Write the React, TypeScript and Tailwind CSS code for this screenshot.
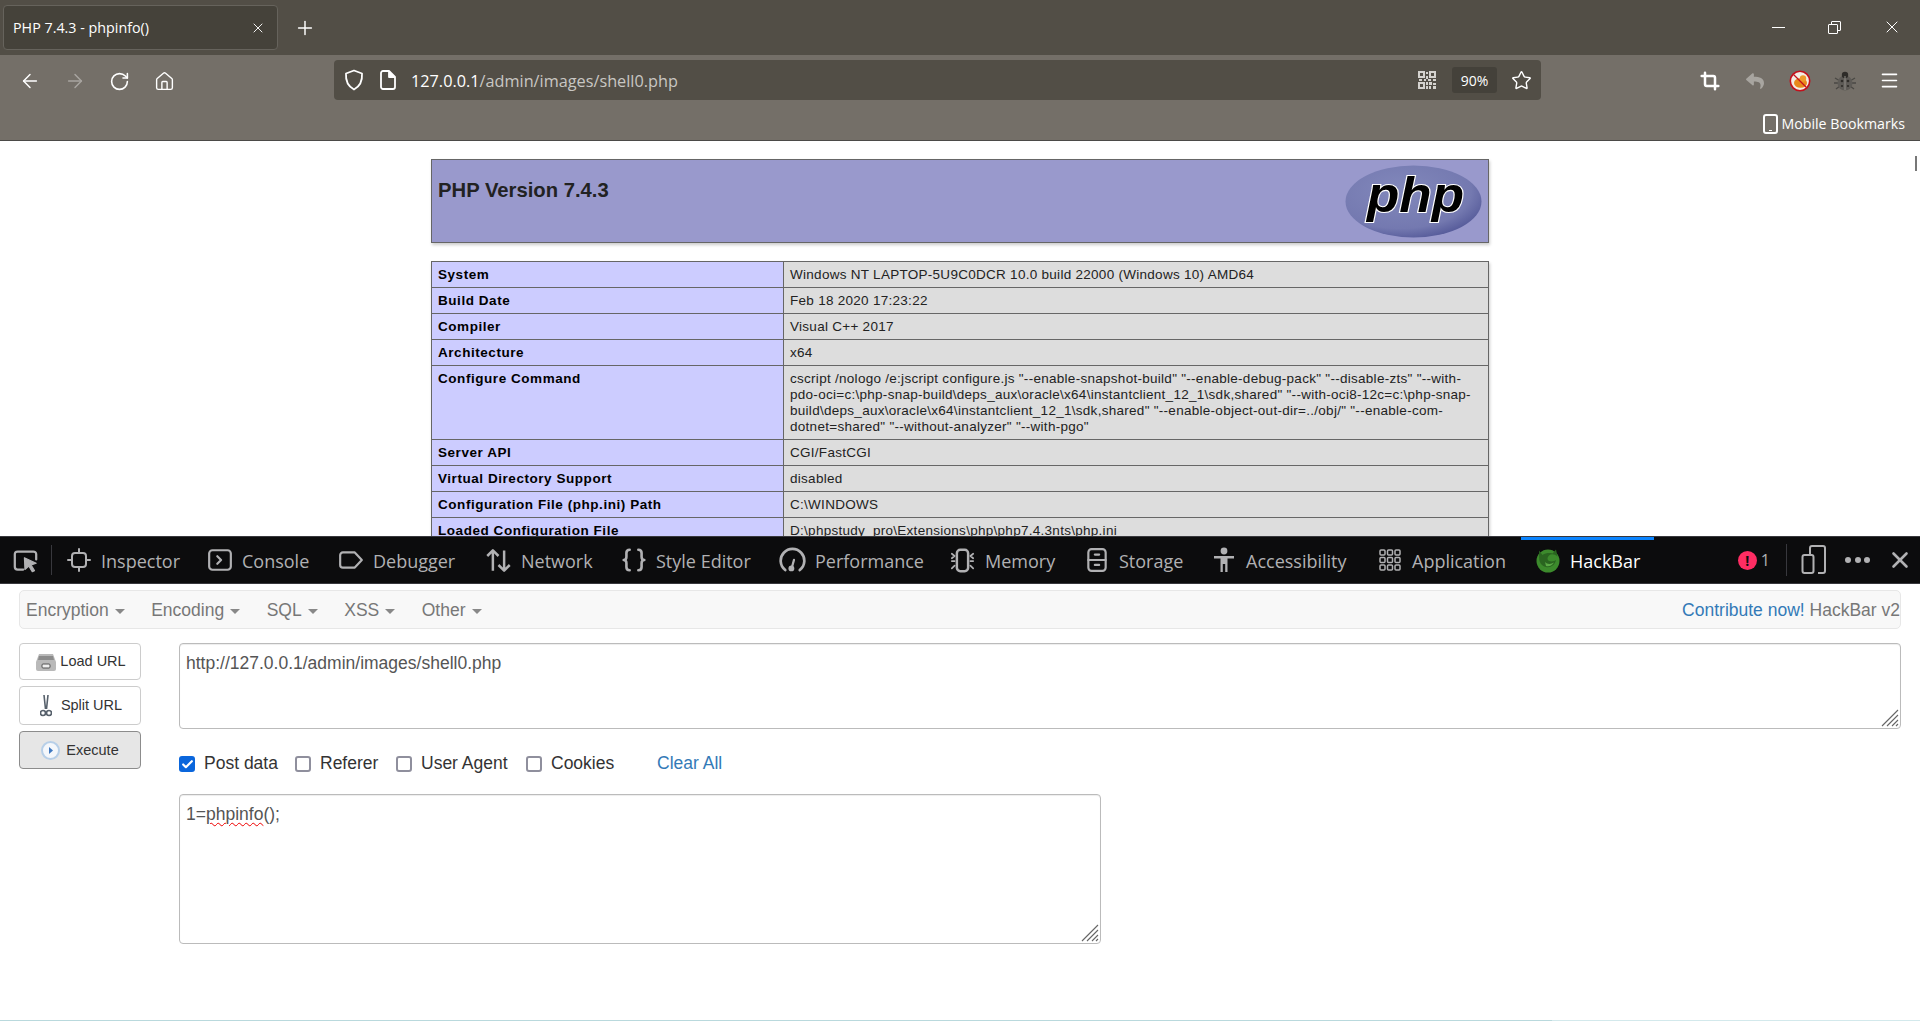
import React from 'react';
import { ArrowLeft, ArrowRight, RotateCw, Home, Star, X, Plus, Crop, Menu, Check } from 'lucide-react';
import { FaReply } from 'react-icons/fa';

const SEGOE = 'font-["Open_Sans",sans-serif]';

const S = ({ children, size = 24 }: { children: React.ReactNode; size?: number }) => (
  <svg width={size} height={size} viewBox="0 0 24 24" fill="none" stroke="currentColor" strokeWidth="2" strokeLinecap="round" strokeLinejoin="round" className="shrink-0">
    {children}
  </svg>
);

const PickerIcon = () => (
  <S size={27}>
    <path d="M10 20H5a2.5 2.5 0 0 1-2.5-2.5v-11A2.5 2.5 0 0 1 5 4h14a2.5 2.5 0 0 1 2.5 2.5V11" />
    <path d="M11 9.5l10.5 5-4.5 1.5 3 5-2 1-3-5-3.5 3z" fill="currentColor" strokeWidth="1" />
  </S>
);
const InspectorIcon = () => (
  <S>
    <rect x="5" y="5" width="14" height="14" rx="3" />
    <path d="M12 1v4M12 19v4M1 12h4M19 12h4" />
  </S>
);
const ConsoleIcon = () => (
  <S size={26}>
    <rect x="2" y="3" width="20" height="18" rx="3" />
    <path d="M9.5 8.5l3.5 3.5-3.5 3.5" />
  </S>
);
const DebuggerIcon = () => (
  <S size={26}>
    <path d="M4.5 5h11l6.5 7-6.500 7h-11A2.500 2.500 0 0 1 2 16.500v-9A2.500 2.500 0 0 1 4.500 5z" />
  </S>
);
const NetworkIcon = () => (
  <S size={27}>
    <path d="M7 21V3M2 8l5-5 5 5M17 3v18M12 16l5 5 5-5" strokeWidth="2.2" strokeLinecap="butt" />
  </S>
);
const StyleIcon = () => (
  <S size={26}>
    <path d="M8 2.500c-2.500 0-3 1-3 3v3.500c0 2-1 3-2.500 3 1.500 0 2.500 1 2.500 3v3.500c0 2 .5 3 3 3M16 2.500c2.500 0 3 1 3 3v3.500c0 2 1 3 2.500 3-1.500 0-2.500 1-2.500 3v3.500c0 2-.5 3-3 3" strokeWidth="2.400" />
  </S>
);
const PerformanceIcon = () => (
  <S size={27}>
    <path d="M5.500 20.500a10.500 10.500 0 1 1 13 0" strokeWidth="2.400" />
    <circle cx="11" cy="19" r="2.600" fill="currentColor" stroke="none" />
    <path d="M11.500 18l1.800-6.500" />
  </S>
);
const MemoryIcon = () => (
  <S size={27}>
    <rect x="7" y="2.500" width="10" height="19" rx="3" strokeWidth="2.200" />
    <path d="M2.500 6l2.500 2-2.500 2M2.500 12.500H5M2.500 19l2.500-2.500M21.500 6L19 8l2.500 2M21.500 12.500H19M21.500 19L19 16.500" strokeWidth="1.500" />
  </S>
);
const StorageIcon = () => (
  <S size={26}>
    <rect x="4" y="2" width="16" height="20" rx="3" />
    <path d="M4 12h16M10 7h4M10 16.500h4" />
  </S>
);
const AccessibilityIcon = () => (
  <svg width="24" height="26" viewBox="0 0 24 26" fill="currentColor" className="shrink-0">
    <circle cx="12" cy="4" r="3.400" />
    <path d="M2 9h20v2.600h-6.500V25h-2.300v-8h-2.400v8H8.500V11.600H2z" />
  </svg>
);
const ApplicationIcon = () => (
  <S size={24}>
    {[2, 9.5, 17].flatMap((y) =>
      [2, 9.5, 17].map((x) => <rect key={`${x}-${y}`} x={x} y={y} width="5" height="5" rx="1" strokeWidth="1.500" />),
    )}
  </S>
);
const HackBarIcon = () => (
  <svg width="26" height="26" viewBox="0 0 26 26" className="shrink-0">
    <circle cx="13" cy="14" r="11.500" fill="#3c8a2c" />
    <path d="M4 3.500l3.500 4.500c3-2 7-2.500 10-1.500L21 2.500l1.500 7c-3-2.500-6.500-2.800-8.500-1-2 1.600-2 4.500 0 5.500 2.500 1 5.500.3 7-1-1 5-5.500 8-10 7s-7-5-6.800-9z" fill="#2a6520" />
    <path d="M10 15c2 2.500 6 2.500 9 .5-1.500 3-5 4.500-8 3.500z" fill="#5aa845" />
  </svg>
);

const ShieldIcon = () => (
  <svg width="20" height="22" viewBox="0 0 20 22" fill="none" stroke="currentColor" strokeWidth="1.800" strokeLinejoin="round">
    <path d="M10 1.500L18 4.500c.5 7-1.500 12.500-8 16-6.500-3.500-8.500-9-8-16z" />
  </svg>
);
const FileIcon = () => (
  <svg width="16" height="20" viewBox="0 0 16 20" fill="none" stroke="currentColor" strokeWidth="1.800" strokeLinejoin="round">
    <path d="M3 1h6l6 6v10a2 2 0 0 1-2 2H3a2 2 0 0 1-2-2V3a2 2 0 0 1 2-2z" />
    <path d="M9 1v6h6" fill="currentColor" />
  </svg>
);
const QrIcon = () => (
  <svg width="18" height="18" viewBox="0 0 18 18" fill="#d4d2ce">
    <path fillRule="evenodd" d="M0 0h7v7H0zM2 2v3h3V2zM11 0h7v7h-7zM13 2v3h3V2zM0 11h7v7H0zM2 13v3h3v-3z" />
    <path d="M8 1h2v2H8zM8 5h2v3H8zM1 8h3v2H1zM6 8h2v2H6zM10 8h3v2h-3zM15 8h3v2h-3zM8 11h2v3H8zM11 11h3v3h-3zM15 12h3v2h-3zM8 15h2v3H8zM11 15h2v3h-2zM15 15h3v3h-3z" />
  </svg>
);
const NoEntryAddon = () => (
  <svg width="22" height="22" viewBox="0 0 22 22">
    <circle cx="11" cy="11" r="9.500" fill="#f3ece4" />
    <ellipse cx="11.500" cy="13" rx="6.500" ry="4.800" fill="#e8891c" />
    <circle cx="14" cy="8.500" r="3.200" fill="#ee9a2c" />
    <circle cx="11" cy="11" r="9.700" fill="none" stroke="#c3101c" strokeWidth="1.600" />
    <path d="M4.500 4.500l13 13" stroke="#c3101c" strokeWidth="1.300" />
  </svg>
);
const BugIcon = () => (
  <svg width="22" height="22" viewBox="0 0 22 22">
    <path d="M1 8l5 3M0 13h5M2 19l4-3M21 8l-5 3M22 13h-5M20 19l-4-3" stroke="#4a4844" strokeWidth="1.300" />
    <circle cx="11" cy="13" r="7.500" fill="#5e5b57" />
    <circle cx="11" cy="5" r="3.200" fill="#2e2c29" />
    <path d="M11 6v14" stroke="#8f8c87" />
    <circle cx="8" cy="11" r="1.300" fill="#2e2c29" />
    <circle cx="14" cy="11" r="1.300" fill="#2e2c29" />
    <circle cx="8" cy="16" r="1.100" fill="#2e2c29" />
    <circle cx="14" cy="16" r="1.100" fill="#2e2c29" />
  </svg>
);

const PhpLogo = () => (
  <svg width="137" height="73" viewBox="0 0 137 73" className="shrink-0 overflow-visible">
    <defs>
      <radialGradient id="php-bg" cx="40%" cy="35%" r="75%">
        <stop offset="0%" stopColor="#8288bb" />
        <stop offset="70%" stopColor="#7479b0" />
        <stop offset="100%" stopColor="#4a4f91" />
      </radialGradient>
    </defs>
    <ellipse cx="68.500" cy="36.500" rx="68" ry="36" fill="url(#php-bg)" />
    <text
      x="22"
      y="47"
      fontFamily='"Liberation Sans", sans-serif'
      fontWeight="700"
      fontStyle="italic"
      fontSize="50"
      textLength="97"
      lengthAdjust="spacingAndGlyphs"
      fill="#000"
      stroke="#fff"
      strokeWidth="2.200"
      paintOrder="stroke"
    >
      php
    </text>
  </svg>
);

const rows: [string, string][] = [
  ['System', 'Windows NT LAPTOP-5U9C0DCR 10.0 build 22000 (Windows 10) AMD64'],
  ['Build Date', 'Feb 18 2020 17:23:22'],
  ['Compiler', 'Visual C++ 2017'],
  ['Architecture', 'x64'],
  [
    'Configure Command',
    'cscript /nologo /e:jscript configure.js "--enable-snapshot-build" "--enable-debug-pack" "--disable-zts" "--with-\npdo-oci=c:\\php-snap-build\\deps_aux\\oracle\\x64\\instantclient_12_1\\sdk,shared" "--with-oci8-12c=c:\\php-snap-\nbuild\\deps_aux\\oracle\\x64\\instantclient_12_1\\sdk,shared" "--enable-object-out-dir=../obj/" "--enable-com-\ndotnet=shared" "--without-analyzer" "--with-pgo"',
  ],
  ['Server API', 'CGI/FastCGI'],
  ['Virtual Directory Support', 'disabled'],
  ['Configuration File (php.ini) Path', 'C:\\WINDOWS'],
  ['Loaded Configuration File', 'D:\\phpstudy_pro\\Extensions\\php\\php7.4.3nts\\php.ini'],
];

const tabs = [
  { name: 'Inspector', width: 'w-[78px]', icon: <InspectorIcon /> },
  { name: 'Console', width: 'w-[68px]', icon: <ConsoleIcon /> },
  { name: 'Debugger', width: 'w-[85px]', icon: <DebuggerIcon /> },
  { name: 'Network', width: 'w-[72px]', icon: <NetworkIcon /> },
  { name: 'Style Editor', width: 'w-[96px]', icon: <StyleIcon /> },
  { name: 'Performance', width: 'w-[107px]', icon: <PerformanceIcon /> },
  { name: 'Memory', width: 'w-[71px]', icon: <MemoryIcon /> },
  { name: 'Storage', width: 'w-[64px]', icon: <StorageIcon /> },
  { name: 'Accessibility', width: 'w-[103px]', icon: <AccessibilityIcon /> },
  { name: 'Application', width: 'w-[95px]', icon: <ApplicationIcon /> },
];

const Grip = () => (
  <svg width="18" height="18" viewBox="0 0 18 18" className="absolute right-[1px] bottom-[1px]" stroke="#666" strokeWidth="1.100">
    <path d="M1 17L17 1M6 17L17 6M11 17l6-6M15 17l2-2" />
  </svg>
);

const CheckOption = ({ label, checked, className }: { label: string; checked?: boolean; className: string }) => (
  <label className={`flex items-center gap-[9px] ${className}`}>
    {checked ? (
      <span className="flex h-4 w-4 items-center justify-center rounded-[3px] bg-[#0a66dc]">
        <Check size={13} strokeWidth={4} color="white" />
      </span>
    ) : (
      <span className="h-4 w-4 rounded-[3px] border-2 border-[#8f8f9d] bg-white" />
    )}
    <span className="-mt-[2px]">{label}</span>
  </label>
);

const MenuItem = ({ label }: { label: string }) => (
  <span className="flex items-center gap-[6px]">
    {label}
    <span className="mt-[2px] h-0 w-0 border-x-[5px] border-t-[5px] border-x-transparent border-t-[#888]" />
  </span>
);

export default function App() {
  return (
    <div className="flex h-[1021px] w-full flex-col overflow-hidden bg-white">
      {/* tab strip */}
      <div className={`flex h-[55px] items-start bg-[#524e46] text-white ${SEGOE}`}>
        <div className="ml-[3px] mt-[5px] flex h-[45px] w-[275px] items-center justify-between rounded-[4px] border border-[#66635c] bg-[#45423a] pl-[9px] pr-[11px] text-[14.300px]">
          <span className="pt-[1px]">PHP 7.4.3 - phpinfo()</span>
          <X size={16} strokeWidth={1.4} />
        </div>
        <div className="ml-[16px] mt-[17px]">
          <Plus size={22} strokeWidth={1.6} />
        </div>
        <div className="ml-auto mt-[17px] flex items-center pr-[18px]">
          <span className="h-[1px] w-[13px] bg-white" />
          <span className="relative ml-[43px] h-[13px] w-[13px]">
            <span className="absolute right-0 top-0 h-[10px] w-[10px] rounded-[1px] border border-white" />
            <span className="absolute bottom-0 left-0 h-[10px] w-[10px] rounded-[1px] border border-white bg-[#524e46]" />
          </span>
          <span className="ml-[41px]">
            <X size={20} strokeWidth={1.2} />
          </span>
        </div>
      </div>

      {/* toolbar */}
      <div className={`h-[86px] border-b border-[#4b4a47] bg-[#746f68] text-white ${SEGOE}`}>
        <div className="flex h-[45px] items-end pl-[7px]">
          <div className="flex h-[40px] items-center pt-[2px]">
            <span className="flex w-[45px] justify-center"><ArrowLeft size={22} strokeWidth={1.6} /></span>
            <span className="flex w-[45px] justify-center text-[#a8a5a0]"><ArrowRight size={22} strokeWidth={1.6} /></span>
            <span className="flex w-[45px] justify-center"><RotateCw size={21} strokeWidth={1.8} /></span>
            <span className="flex w-[45px] justify-center"><Home size={21} strokeWidth={1.6} /></span>
          </div>
          <div className="ml-[147px] flex h-[40px] w-[1207px] items-center rounded-[4px] bg-[#524e46] pl-[10px] pr-[9px]">
            <ShieldIcon />
            <span className="ml-[16px]"><FileIcon /></span>
            <span className="ml-[15px] pt-[2px] text-[16.250px] text-[#c9c7c3]">
              <span className="text-white">127.0.0.1</span>/admin/images/shell0.php
            </span>
            <span className="ml-auto"><QrIcon /></span>
            <span className="ml-[16px] flex h-[26px] w-[45px] items-center justify-center rounded-[3px] bg-[#44413a] text-[14px]">90%</span>
            <span className="ml-[14px]"><Star size={21} strokeWidth={1.6} /></span>
          </div>
          <div className="ml-auto flex h-[40px] items-center pr-[8px] pt-[1px]">
            <span className="flex w-[45px] justify-center"><Crop size={20} strokeWidth={3} /></span>
            <span className="flex w-[45px] justify-center text-[#a8a5a0]"><FaReply size={18} /></span>
            <span className="flex w-[45px] justify-center"><NoEntryAddon /></span>
            <span className="flex w-[45px] justify-center"><BugIcon /></span>
            <span className="flex w-[45px] justify-center"><Menu size={21} strokeWidth={1.8} /></span>
          </div>
        </div>
        <div className="mt-[13px] flex items-center justify-end gap-[3px] pr-[15px] text-[14.200px]">
          <span className="flex h-[20px] w-[15px] items-end justify-center rounded-[3px] border-2 border-white pb-[1px]">
            <span className="h-[1px] w-[3px] bg-white" />
          </span>
          <span>Mobile Bookmarks</span>
        </div>
      </div>

      {/* php page */}
      <div className={`relative h-[395px] shrink-0 overflow-hidden pt-[18px] font-["Liberation_Sans",sans-serif]`}>
        <div className="mx-auto w-[1058px]">
          <div className="flex h-[84px] justify-between border border-[#666] bg-[#99c] pl-[6px] pr-[6px] pt-[5px] shadow-[1px_2px_3px_#ccc]">
            <h1 className="mt-[13px] text-[20.250px] font-bold leading-[24px] text-[#222]">PHP Version 7.4.3</h1>
            <PhpLogo />
          </div>
          <table className="mt-[18px] w-[1058px] table-fixed border-collapse text-[13.500px] leading-[16px] shadow-[1px_2px_3px_#ccc]">
            <colgroup>
              <col className="w-[352px]" />
              <col />
            </colgroup>
            <tbody>
              {rows.map(([k, v]) => (
                <tr key={k}>
                  <td className="border border-[#666] bg-[#ccf] px-[6px] py-[4.500px] align-top font-bold tracking-[0.55px] text-black">{k}</td>
                  <td className="whitespace-pre-line border border-[#666] bg-[#ddd] px-[6px] py-[4.500px] align-top tracking-[0.28px] text-[#222]">{v}</td>
                </tr>
              ))}
            </tbody>
          </table>
        </div>
        <span className="absolute right-[3px] top-[15px] h-[15px] w-[2px] bg-[#777]" />
      </div>

      {/* devtools bar */}
      <div className={`flex h-[48px] shrink-0 items-stretch border-y border-[#38383d] bg-[#0c0c0d] text-[#b1b1b3] ${SEGOE}`}>
        <div className="my-[8px] flex w-[52px] items-center justify-center border-r border-[#38383d]">
          <PickerIcon />
        </div>
        {tabs.map((t) => (
          <div key={t.name} className="flex items-center gap-[10px] px-[14px] text-[18px]">
            <span className="flex w-[25px] justify-center">{t.icon}</span>
            <span className={`whitespace-nowrap pt-[2px] ${t.width}`}>{t.name}</span>
          </div>
        ))}
        <div className="relative flex items-center gap-[10px] px-[14px] text-[18px] text-white">
          <span className="absolute inset-x-0 top-0 h-[3px] bg-[#0a84ff]" />
          <span className="flex w-[25px] justify-center"><HackBarIcon /></span>
          <span className="w-[70px] whitespace-nowrap pt-[2px]">HackBar</span>
        </div>
        <div className="ml-auto flex items-center pr-[7px]">
          <span className="flex h-[19px] w-[19px] items-center justify-center rounded-full bg-[#ff2d63] text-[14px] font-bold text-[#0c0c0d]">!</span>
          <span className="ml-[4px] text-[16px]">1</span>
          <span className="ml-[16px] h-[32px] w-[1px] bg-[#38383d]" />
          <svg width="26" height="32" viewBox="0 0 26 32" fill="none" stroke="currentColor" strokeWidth="2" className="ml-[14px]">
            <path d="M9 11V4a2 2 0 0 1 2-2h11a2 2 0 0 1 2 2v23a2 2 0 0 1-2 2h-5" />
            <rect x="1.500" y="11" width="11" height="18" rx="2" />
          </svg>
          <span className="ml-[18px] flex gap-[3.500px]">
            <span className="h-[6px] w-[6px] rounded-full bg-current" />
            <span className="h-[6px] w-[6px] rounded-full bg-current" />
            <span className="h-[6px] w-[6px] rounded-full bg-current" />
          </span>
          <span className="ml-[17px]"><X size={26} strokeWidth={2.4} /></span>
        </div>
      </div>

      {/* hackbar panel */}
      <div className="flex flex-1 flex-col px-[19px] font-['Liberation_Sans',sans-serif] text-[17.500px]">
        <div className="mt-[6px] flex h-[39px] items-center justify-between rounded-[5px] border border-[#e7e7e7] bg-[#f8f8f8] pl-[6px] pt-[1px] text-[#777]">
          <div className="flex items-center gap-[26.500px]">
            <MenuItem label="Encryption" />
            <MenuItem label="Encoding" />
            <MenuItem label="SQL" />
            <MenuItem label="XSS" />
            <MenuItem label="Other" />
          </div>
          <span><span className="text-[#337ab7]">Contribute now!</span> HackBar v2</span>
        </div>

        <div className="mt-[14px] flex gap-[38px]">
          <div className="flex w-[122px] flex-col text-[14.500px] text-[#333]">
            <div className="flex h-[37px] items-center justify-center gap-[4px] rounded-[4px] border border-[#ccc] pl-[2px]">
              <svg width="20" height="18" viewBox="0 0 20 18">
                <path d="M3 1h14l3 8v7a2 2 0 0 1-2 2H2a2 2 0 0 1-2-2V9z" fill="#b9b9b9" />
                <path d="M3 3h14l1 4H2z" fill="#8c8c8c" />
                <rect x="6" y="11" width="8" height="4" rx="1" fill="#eee" stroke="#555" />
              </svg>
              <span className="pt-[1px]">Load URL</span>
            </div>
            <div className="mt-[6px] flex h-[39px] items-center justify-center gap-[9px] rounded-[4px] border border-[#ccc] pl-[2px]">
              <svg width="12" height="23" viewBox="0 0 12 23" fill="none" stroke="#56606b" strokeWidth="1.600">
                <path d="M4 1l1.500 14M8 1L6.500 15" />
                <circle cx="3" cy="19" r="2.500" />
                <circle cx="9" cy="19" r="2.500" />
              </svg>
              Split URL
            </div>
            <div className="mt-[6px] flex h-[38px] items-center justify-center gap-[6px] rounded-[4px] border border-[#8c8c8c] bg-[#e6e6e6]">
              <svg width="19" height="19" viewBox="0 0 19 19">
                <circle cx="9.500" cy="9.500" r="8.500" fill="#f4f7fb" stroke="#b7cfe8" strokeWidth="2" />
                <path d="M8 6l4 3.500-4 3.500z" fill="#3f78c0" />
              </svg>
              <span className="pt-[1px]">Execute</span>
            </div>
          </div>

          <div className="flex-1 text-[#555]">
            <div className="relative h-[86px] rounded-[4px] border border-[#bbb] px-[6px] pb-[5px] pt-[7px] leading-[24px] shadow-[inset_0_1px_1px_rgba(0,0,0,0.075)]">
              http://127.0.0.1/admin/images/shell0.php
              <Grip />
            </div>
            <div className="mt-[27px] flex h-[16px] items-center text-[#333]">
              <CheckOption label="Post data" checked className="w-[116px]" />
              <CheckOption label="Referer" className="w-[101px]" />
              <CheckOption label="User Agent" className="w-[130px]" />
              <CheckOption label="Cookies" className="w-[131px]" />
              <span className="-mt-[2px] text-[#337ab7]">Clear All</span>
            </div>
            <div className="relative mt-[22px] h-[150px] w-[922px] rounded-[4px] border border-[#bbb] px-[6px] pb-[5px] pt-[7px] leading-[24px] shadow-[inset_0_1px_1px_rgba(0,0,0,0.075)]">
              1=<span className="underline decoration-[#e00] decoration-wavy decoration-1 underline-offset-2">phpinfo</span>();
              <Grip />
            </div>
          </div>
        </div>
      </div>
      <div className="flex h-[1px] shrink-0">
        <span className="w-[1552px] bg-[#b9d9dd]" />
        <span className="flex-1 bg-[#d3e9ec]" />
      </div>
    </div>
  );
}
